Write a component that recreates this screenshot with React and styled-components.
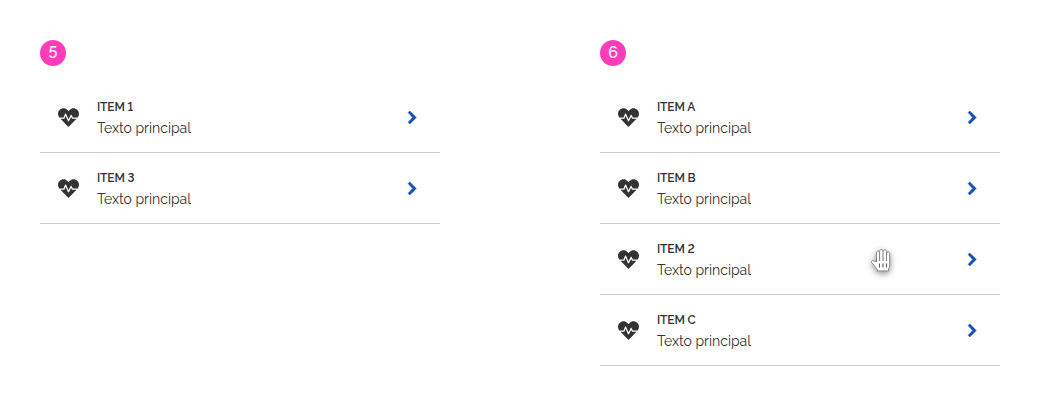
import React from "react";
import styled, { createGlobalStyle } from "styled-components";
import { FaHeartbeat } from "react-icons/fa";

const GlobalStyle = createGlobalStyle`
  *, *::before, *::after { box-sizing: border-box; }
  body {
    margin: 0;
    background: #fff;
    color: #333;
    font-family: Raleway, Lato, sans-serif;
    font-variant-numeric: lining-nums;
  }
`;

const Page = styled.main`
  display: grid;
  grid-template-columns: 400px 400px;
  column-gap: 160px;
  align-items: start;
  height: 407px;
  padding: 40px 40px 0;
`;

const Panel = styled.section`
  display: flex;
  flex-direction: column;
  gap: 16px;
`;

const StepBadge = styled.span`
  display: flex;
  align-items: center;
  justify-content: center;
  width: 26px;
  height: 26px;
  border-radius: 50%;
  background: #ff3dbb;
  color: #fff;
  font-size: 16px;
  font-weight: 500;
  line-height: 26px;
`;

const List = styled.ul`
  margin: 0;
  padding: 0;
  list-style: none;
`;

const Row = styled.li`
  position: relative;
  display: flex;
  align-items: center;
  height: 71px;
  padding: 0 23px 0 18px;
  border-bottom: 1px solid #ccc;
`;

const HeartIcon = styled(FaHeartbeat)`
  flex: none;
  width: 21px;
  height: 21px;
  margin-right: 18px;
  color: #333;
`;

const Copy = styled.div`
  flex: 1;
  display: flex;
  flex-direction: column;
  padding-top: 2px;
`;

const Title = styled.span`
  font-size: 12px;
  font-weight: 600;
  line-height: 20px;
  letter-spacing: -0.15px;
`;

const Text = styled.span`
  font-size: 14px;
  line-height: 22px;
`;

const ChevronIcon = styled.svg`
  flex: none;
  width: 10px;
  height: 14px;
`;

function Chevron() {
  return (
    <ChevronIcon viewBox="0 0 10 14" aria-hidden="true">
      <path
        d="M1.1 2.6L2.8 0.9L9.3 7.5L2.8 14L1.1 12.3L5.6 7.5Z"
        fill="#1450b8"
        stroke="#1450b8"
        strokeWidth="0.5"
        strokeLinejoin="round"
      />
    </ChevronIcon>
  );
}

const HandCursor = styled.svg`
  position: absolute;
  left: 270px;
  top: 22px;
  width: 24px;
  height: 28px;
  overflow: visible;
  filter: drop-shadow(0 2px 3px rgba(0, 0, 0, 0.45));
`;

function GrabHand() {
  return (
    <HandCursor viewBox="0 0 24 28" aria-hidden="true">
      <path
        d="M6.5 16V6.9c0-2.4 3.1-2.4 3.1 0V5.3c0-2.5 3.4-2.5 3.4 0v.4c0-2.4 3.5-2.4 3.5 0v1.8c0-2.3 3.2-2.3 3.2.1v11.2c0 2.4-.8 3.2-1.2 4.5v1.7H7.5v-1.5c-1.6-1.3-2.4-2.8-3.3-4.2L1.7 16.8c-1-1.7.8-2.9 2.2-1.9z"
        fill="#fff"
        stroke="#858585"
        strokeWidth="1"
        strokeLinejoin="round"
      />
      <path d="M9.6 6.9V15M13 5.7V15M16.5 7.5V15" fill="none" stroke="#858585" strokeWidth="1.1" />
      <path d="M9.5 17.5v4M13 17.5v4M16.5 17.5v4" fill="none" stroke="#555" strokeWidth="1.1" />
    </HandCursor>
  );
}

const panels = [
  { step: 5, items: [{ title: "ITEM 1" }, { title: "ITEM 3" }] },
  {
    step: 6,
    items: [{ title: "ITEM A" }, { title: "ITEM B" }, { title: "ITEM 2", held: true }, { title: "ITEM C" }],
  },
];

export default function App() {
  return (
    <>
      <GlobalStyle />
      <Page>
        {panels.map(({ step, items }) => (
          <Panel key={step}>
            <StepBadge>{step}</StepBadge>
            <List>
              {items.map(({ title, held }) => (
                <Row key={title}>
                  <HeartIcon />
                  <Copy>
                    <Title>{title}</Title>
                    <Text>Texto principal</Text>
                  </Copy>
                  <Chevron />
                  {held && <GrabHand />}
                </Row>
              ))}
            </List>
          </Panel>
        ))}
      </Page>
    </>
  );
}
